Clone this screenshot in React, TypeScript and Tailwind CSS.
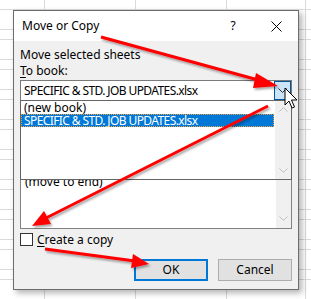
import React from "react";

const Chevron = ({ dir, className }: { dir: "up" | "down"; className?: string }) => (
  <svg width="9" height="5" viewBox="0 0 9 5" className={className}>
    {dir === "down" ? (
      <path d="M0.5 0.5 L4.5 4.5 L8.5 0.5" fill="none" stroke="currentColor" strokeWidth="1" />
    ) : (
      <path d="M0.5 4.5 L4.5 0.5 L8.5 4.5" fill="none" stroke="currentColor" strokeWidth="1" />
    )}
  </svg>
);

export default function App() {
  return (
    <div
      className="relative w-[311px] h-[299px] overflow-hidden bg-white text-[12px] text-black"
      style={{ fontFamily: '"Noto Sans", "Open Sans", sans-serif' }}
    >
      {/* spreadsheet grid background */}
      <div className="absolute inset-0 flex bg-[repeating-linear-gradient(to_bottom,transparent_0px,transparent_9px,#dadada_9px,#dadada_10px,transparent_10px,transparent_29px,#dadada_29px,#dadada_30px)]">
        <div className="w-[45px] h-full border-r border-[#dadada]" />
        <div className="w-[91px] h-full border-r border-[#dadada]" />
        <div className="w-[91px] h-full border-r border-[#dadada]" />
        <div className="w-[79px] h-full border-r border-[#dadada]" />
      </div>

      {/* dialog */}
      <div className="relative ml-[13px] mt-[10px] w-[286px] h-[280px] border border-[#6d6d6d] bg-[#f0f0f0] shadow-[3px_3px_6px_rgba(0,0,0,0.3)] flex flex-col">
        <div className="h-[30px] bg-white flex items-center pl-[8px] text-[12px]">
          <span className="flex-1">Move or Copy</span>
          <span className="w-[12px] mr-[32px] text-center">?</span>
          <svg width="11" height="11" viewBox="0 0 11 11" className="mr-[16px]">
            <path d="M0.5 0.5 L10.5 10.5 M10.5 0.5 L0.5 10.5" stroke="#000" strokeWidth="1" />
          </svg>
        </div>
        <div className="flex flex-col px-[6px] pt-[6px] relative flex-1">
          <div className="leading-[16px]">Move selected sheets</div>
          <div className="leading-[16px]">
            <span className="underline underline-offset-2">T</span>o book:
          </div>
          {/* combo */}
          <div className="mt-[1px] h-[21px] w-[272px] bg-white border border-[#7a7a7a] flex items-center">
            <span className="flex-1 pl-[3px] whitespace-nowrap tracking-[-0.6px]">SPECIFIC &amp; STD. JOB UPDATES.xlsx</span>
            <div className="w-[17px] h-[19px] bg-[#cce4f7] border border-[#005499] flex items-center justify-center text-[#333]">
              <Chevron dir="down" />
            </div>
          </div>
          {/* before sheet list underneath */}
          <div className="h-[128px] w-[272px] bg-white border border-[#828282] flex">
            <div className="flex-1 pt-[72px] pl-[4px] leading-[15px]">(move to end)</div>
            <div className="w-[15px] bg-[#f0f0f0] flex flex-col justify-end items-center pb-[7px] text-[#bdbdbd]">
              <Chevron dir="down" />
            </div>
          </div>
          {/* checkbox */}
          <div className="mt-[4px] flex items-center h-[13px]">
            <div className="w-[13px] h-[13px] border border-[#333] bg-white" />
            <span className="ml-[4px] leading-[13px]">
              <span className="underline underline-offset-2">C</span>reate a copy
            </span>
          </div>
          {/* buttons */}
          <div className="mt-[13px] flex justify-end gap-[10px]">
            <div className="w-[74px] h-[22px] bg-[#e1e1e1] border-2 border-[#0078d7] flex items-center justify-center">OK</div>
            <div className="w-[74px] h-[22px] bg-[#e1e1e1] border border-[#adadad] flex items-center justify-center">Cancel</div>
          </div>

          {/* dropdown popup (over the list) */}
          <div className="absolute left-[6px] top-[59px] w-[272px] h-[80px] bg-white border border-[#646464] flex">
            <div className="flex-1 flex flex-col pt-[1px]">
              <div className="leading-[12px] h-[12px] pl-[3px]">(new book)</div>
              <div className="h-[13px] mr-[1px] bg-[#0078d7] text-white leading-[13px] pl-[3px] outline-1 outline-dotted outline-[#f0a040] -outline-offset-1 whitespace-nowrap tracking-[-0.6px]">
                SPECIFIC &amp; STD. JOB UPDATES.xlsx
              </div>
            </div>
            <div className="w-[16px] bg-[#f0f0f0] flex flex-col justify-between items-center py-[6px] text-[#bdbdbd]">
              <Chevron dir="up" />
              <Chevron dir="down" />
            </div>
          </div>
        </div>
      </div>

      {/* annotation arrows */}
      <svg className="absolute inset-0 pointer-events-none" width="311" height="299" viewBox="0 0 311 299">
        <defs>
          <filter id="sh" x="-10%" y="-10%" width="130%" height="130%">
            <feDropShadow dx="1.5" dy="2" stdDeviation="1.2" floodColor="#000" floodOpacity="0.35" />
          </filter>
        </defs>
        <g filter="url(#sh)" fill="#ff0000" stroke="#ff0000">
          <line x1="101" y1="37" x2="262" y2="81" strokeWidth="3" />
          <polygon points="278,86 256,73 253,88" stroke="none" />
          <line x1="268" y1="106" x2="44" y2="219" strokeWidth="3" />
          <polygon points="32,226 44,211 51,224" stroke="none" />
          <line x1="45" y1="249" x2="135" y2="261" strokeWidth="3" />
          <polygon points="149,264 133,254 131,268" stroke="none" />
        </g>
        {/* mouse cursor */}
        <path
          d="M285 88 L285 105 L289 101 L292 108 L294.5 107 L291.5 100 L297 100 Z"
          fill="#fff"
          stroke="#000"
          strokeWidth="1"
          strokeLinejoin="round"
        />
      </svg>
    </div>
  );
}
